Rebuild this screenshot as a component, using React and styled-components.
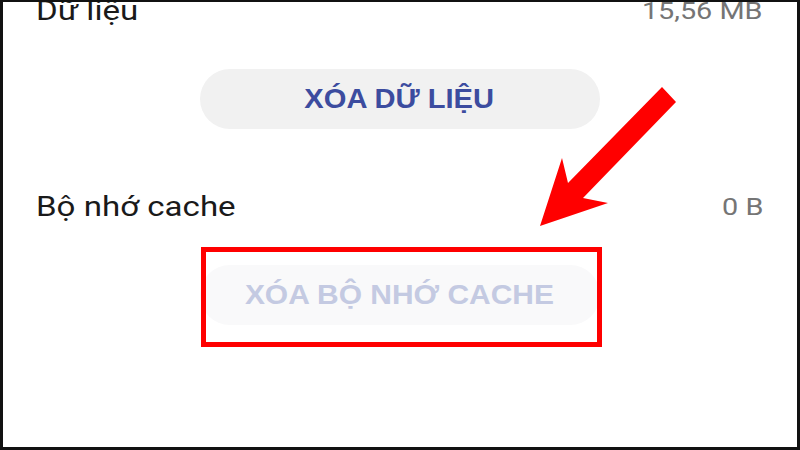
import React from "react";
import styled, { createGlobalStyle } from "styled-components";

const GlobalStyle = createGlobalStyle`
    html, body {
        margin:0;
        padding:0;
        background:#ffffff;
    }
    * {
        box-sizing:border-box;
    }
`;

const Frame = styled.div`
    position:relative;
    width:800px;
    height:450px;
    overflow:hidden;
    background:#ffffff;
    border:3px solid #111111;
    border-top-width:2px;
    font-family:Roboto, "Noto Sans", sans-serif;
`;

// the settings list is scrolled a little, so the first row is cut at the top
const ScrollArea = styled.div`
    margin-top:-23px;
    padding:0 34px 0 33px;
`;

const Section = styled.section`
    display:flex;
    flex-direction:column;
`;

const InfoRow = styled.div`
    height:64px;
    display:flex;
    align-items:center;
    justify-content:space-between;
`;

// the screenshot is stretched sideways, hence the scaleX
const Label = styled.span`
    display:inline-block;
    font-size:27px;
    line-height:1;
    color:#1a1a1a;
    transform:scaleX(1.225);
    transform-origin:left center;
`;

const Value = styled.span`
    display:inline-block;
    font-size:24px;
    line-height:1;
    color:#757575;
    transform:scaleX(1.2);
    transform-origin:right center;
`;

const ButtonRow = styled.div`
    display:flex;
    justify-content:center;
    padding:26px 0 46px;
`;

const ButtonWrap = styled.div`
    position:relative;
`;

const PillButton = styled.button`
    width:400px;
    height:60px;
    padding:0;
    border:none;
    border-radius:30px;
    display:flex;
    align-items:center;
    justify-content:center;
    background:${p => (p.$disabled ? "#f9f9fa" : "#f1f1f1")};
    color:${p => (p.$disabled ? "#c4cae2" : "#3c4c9f")};
    cursor:pointer;
`;

const ButtonText = styled.span`
    display:inline-block;
    font-family:"Liberation Sans", Arial, sans-serif;
    font-size:28px;
    font-weight:700;
    line-height:1;
    transform:scaleX(${p => p.$stretch});
`;

const Highlight = styled.div`
    position:absolute;
    left:1px;
    top:-18px;
    width:401px;
    height:100px;
    border:5.5px solid #ff0000;
    pointer-events:none;
`;

const ArrowLayer = styled.svg`
    position:absolute;
    left:-3px;
    top:-2px;
    width:800px;
    height:450px;
    pointer-events:none;
`;

const rows = [
    { label: "Dữ liệu", value: "15,56 MB", action: "XÓA DỮ LIỆU", stretch: 1.04 },
    { label: "Bộ nhớ cache", value: "0 B", action: "XÓA BỘ NHỚ CACHE", stretch: 1.07, disabled: true, marked: true }
];

const App = () => (
    <>
        <GlobalStyle />
        <Frame>
            <ScrollArea>
                {rows.map(row => (
                    <Section key={row.label}>
                        <InfoRow>
                            <Label>{row.label}</Label>
                            <Value>{row.value}</Value>
                        </InfoRow>
                        <ButtonRow>
                            <ButtonWrap>
                                <PillButton $disabled={row.disabled}>
                                    <ButtonText $stretch={row.stretch}>{row.action}</ButtonText>
                                </PillButton>
                                {row.marked && <Highlight />}
                            </ButtonWrap>
                        </ButtonRow>
                    </Section>
                ))}
            </ScrollArea>
            <ArrowLayer viewBox="0 0 800 450">
                <polygon
                    points="662,87 676,102 583,198 608,203 540,226 562,158 568,183"
                    fill="#ff0000"
                />
            </ArrowLayer>
        </Frame>
    </>
);

export default App;
